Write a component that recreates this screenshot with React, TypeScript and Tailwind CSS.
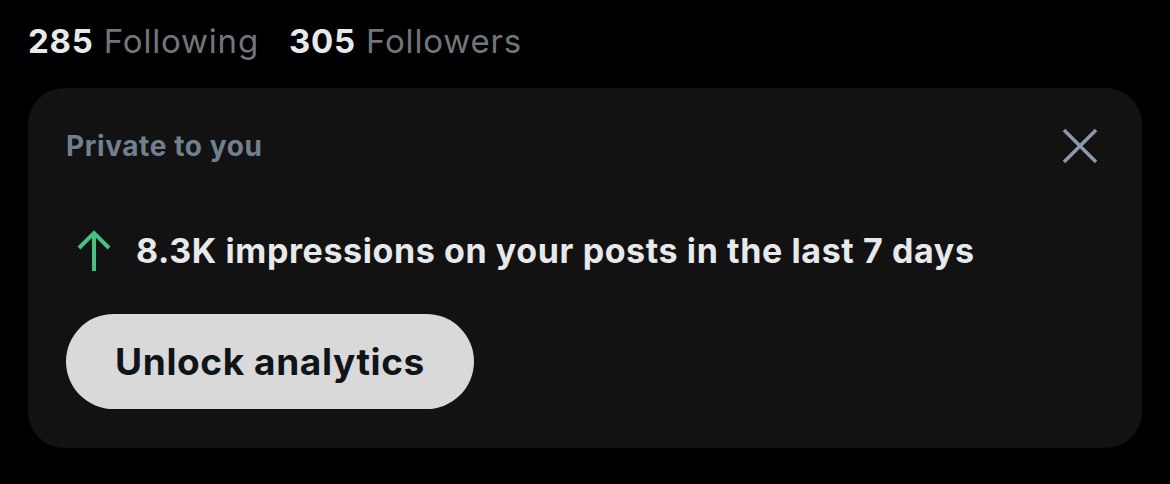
const App = () => {
  return (
    <div className="w-[1170px] h-[484px] bg-black overflow-hidden font-['Inter',sans-serif]">
      <div className="flex items-center gap-[30px] pl-[28px] pt-[20px] h-[62px] text-[33px] leading-none tracking-[0.8px]">
        <div>
          <span className="font-bold text-[#e7e9ea]">285</span>
          <span className="text-[#71767b]"> Following</span>
        </div>
        <div>
          <span className="font-bold text-[#e7e9ea]">305</span>
          <span className="text-[#71767b]"> Followers</span>
        </div>
      </div>

      <div className="mt-[26px] ml-[28px] w-[1114px] h-[360px] rounded-[36px] bg-[#121212] pl-[38px] pr-[44px] pt-[40px]">
        <div className="flex items-center justify-between h-[36px]">
          <span className="text-[28px] font-bold text-[#71808d] leading-none tracking-[0.6px]">Private to you</span>
          <svg width="36" height="36" viewBox="0 0 36 36">
            <path d="M2 2 L34 34 M34 2 L2 34" stroke="#8b98a5" strokeWidth="3.5" strokeLinecap="butt" />
          </svg>
        </div>

        <div className="flex items-center gap-[24px] mt-[66px] ml-[10px]">
          <svg width="36" height="42" viewBox="0 0 36 42">
            <path d="M18 41 V3 M3 18 L18 3 L33 18" stroke="#47c084" strokeWidth="4" fill="none" />
          </svg>
          <span className="text-[34px] font-bold text-[#e7e9ea] leading-none tracking-[0.6px]">
            8.3K impressions on your posts in the last 7 days
          </span>
        </div>

        <button className="mt-[42px] w-[408px] h-[95px] rounded-full bg-[#d9d9d9] text-[37px] font-bold text-[#0f1419] tracking-[0.6px] flex items-center justify-center">
          Unlock analytics
        </button>
      </div>
    </div>
  );
};

export default App;
